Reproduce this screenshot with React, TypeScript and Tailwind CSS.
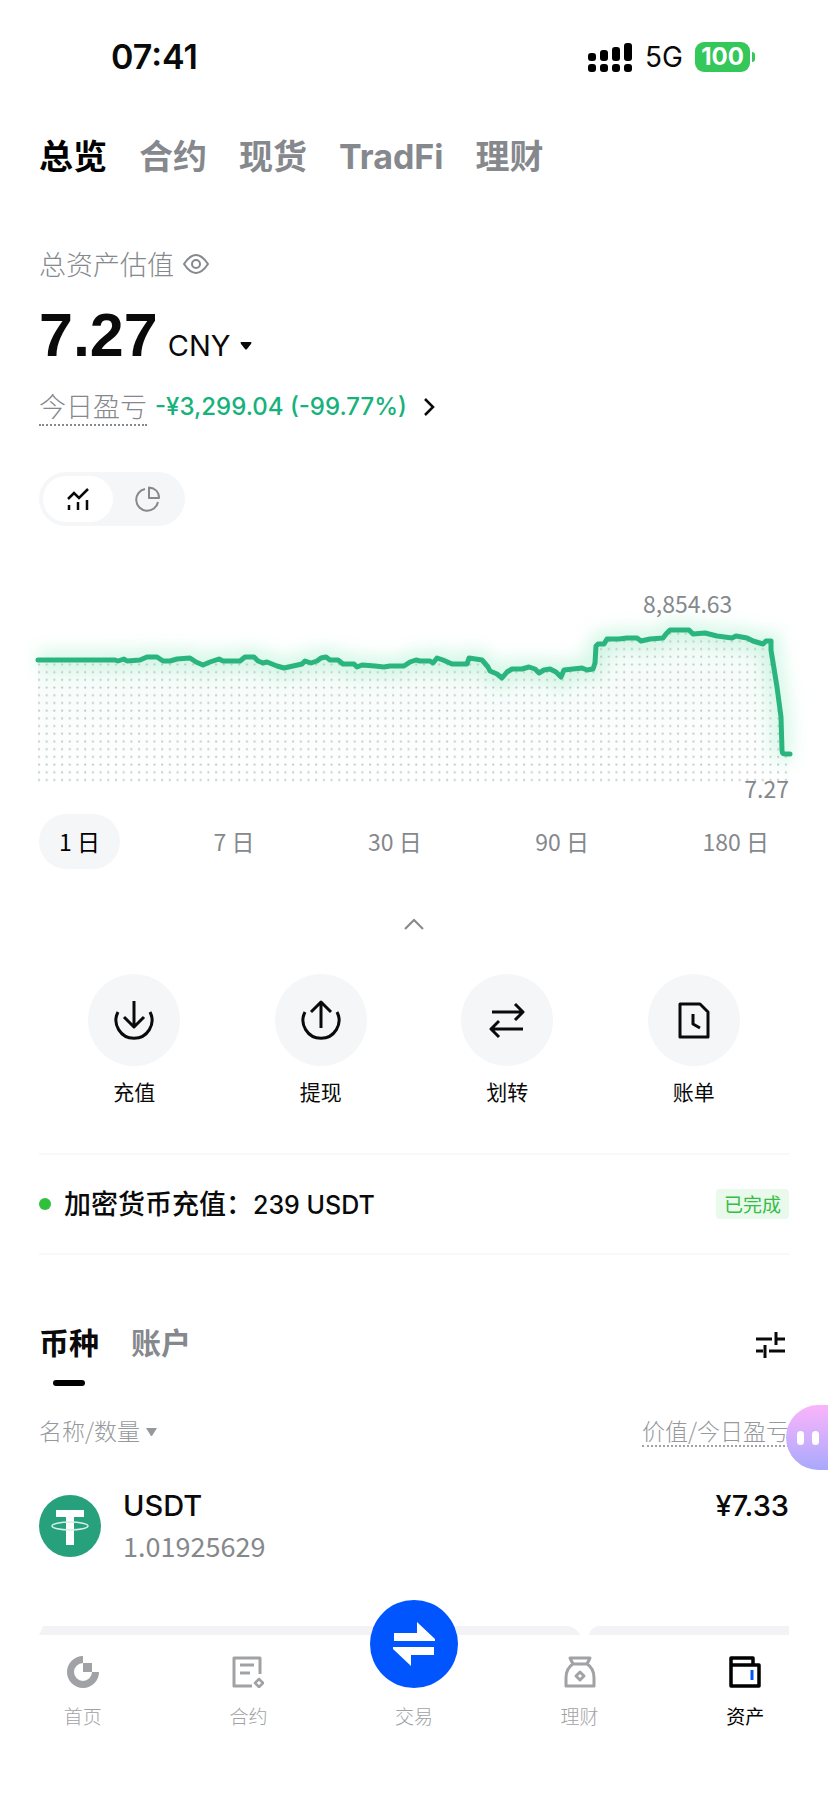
import type { ReactNode } from "react";

const LATIN = "font-['Inter','Noto_Sans_CJK_SC',sans-serif]";

const accountTabs = ["总览", "合约", "现货", "TradFi", "理财"];
const ranges = ["1 日", "7 日", "30 日", "90 日", "180 日"];

const linePath =
  "M38 660H115L118 661 124 659 127 661 140 660 147 657H157L163 661 170 661 177 659 190 658 196 662 203 665 210 662 219 659 223 661H240L245 657H254L258 661 263 663 267 662 277 666 284 668 293 666 302 664 305 661 311 663 317 661 321 658 326 657 330 660 338 660 343 664H354L357 667 362 665 375 666 384 667 390 666 404 666 410 662 416 660 420 661 430 661 433 663 437 658 443 660 452 664H467L469 658 482 660 488 667 490 671 497 674 502 678 507 672 512 669H522L529 667 535 669 539 673 544 670 550 669 556 672 561 677 564 670 573 669 582 668 587 670 593 669 595 663 596 646 598 644H604L607 639 619 639 627 638H637L641 641 650 639 663 638 666 634 670 630H689L693 634 705 633 717 636 732 638 736 636 747 638 753 641 763 644 766 641H771L771 650 777 687 781 717 782 750Q782 754 785 754H790";

function Glyph({ size = 32, children }: { size?: number; children: ReactNode }) {
  return (
    <svg
      width={size}
      height={size}
      viewBox={`0 0 ${size} ${size}`}
      fill="none"
      stroke="currentColor"
      strokeWidth="3"
      strokeLinejoin="round"
      aria-hidden="true"
    >
      {children}
    </svg>
  );
}

function StatusBar() {
  const bars = [8, 11, 14, 18];
  return (
    <div className={`flex h-28 items-center justify-between pt-0.5 pr-[73px] pl-[111px] ${LATIN}`}>
      <span className="text-[34px] leading-10 font-semibold">07:41</span>
      <div className="flex items-center">
        <svg width="44" height="30" viewBox="0 0 44 30" aria-hidden="true">
          {bars.map((h, i) => (
            <g key={h}>
              <rect x={i * 12} y={19 - h} width="8" height={h} rx="3" />
              <rect x={i * 12} y="22" width="8" height="8" rx="3" />
            </g>
          ))}
        </svg>
        <span className="ml-[13px] text-[28px] leading-8">5G</span>
        <span className="ml-3 flex h-[30px] w-[55px] items-center justify-center rounded-[9px] bg-[#34c759] text-2xl font-bold text-white">
          100
        </span>
        <span className="ml-0.5 h-2.5 w-[3px] rounded-r-full bg-[#34c759]" />
      </div>
    </div>
  );
}

function TrendChart() {
  return (
    <svg viewBox="39 590 750 210" className="mt-16 block w-full overflow-visible" role="img" aria-label="资产走势">
      <defs>
        <pattern id="dots" x="35" y="660" width="7.7" height="7.7" patternUnits="userSpaceOnUse">
          <circle cx="4" cy="4.5" r="1.1" fill="#bcc8c4" />
        </pattern>
        <linearGradient id="fade" x1="0" y1="0" x2="0" y2="1">
          <stop offset="0" stopColor="#2bb57e" stopOpacity="0.06" />
          <stop offset="1" stopColor="#2bb57e" stopOpacity="0" />
        </linearGradient>
        <filter id="glow" x="-10%" y="-60%" width="120%" height="220%">
          <feGaussianBlur stdDeviation="9" />
        </filter>
      </defs>
      <path d={`${linePath}V783H38Z`} fill="url(#fade)" />
      <path d={linePath} fill="none" stroke="#6fe6b0" strokeOpacity="0.35" strokeWidth="16" filter="url(#glow)" />
      <path d={`${linePath}V783H38Z`} fill="url(#dots)" />
      <path
        d={linePath}
        fill="none"
        stroke="#2bb57e"
        strokeWidth="5"
        strokeLinecap="round"
        strokeLinejoin="round"
      />
      <g fill="#85888c" fontSize="23" fontFamily="'Noto Sans CJK SC', sans-serif">
        <text x="643" y="613">8,854.63</text>
        <text x="789" y="798" textAnchor="end">7.27</text>
      </g>
    </svg>
  );
}

function Action({ label, children }: { label: string; children: ReactNode }) {
  return (
    <button className="flex flex-col items-center">
      <span className="flex size-[92px] items-center justify-center rounded-full bg-[#f4f6f8]">
        <Glyph size={40}>{children}</Glyph>
      </span>
      <span className="mt-[11px] text-[21px] leading-7">{label}</span>
    </button>
  );
}

function NavItem({ label, active = false, children }: { label: string; active?: boolean; children: ReactNode }) {
  return (
    <a href="#" className={`flex flex-col items-center ${active ? "text-black" : "font-light text-[#a0a2a5]"}`}>
      {children}
      <span className="mt-4 text-[19px] leading-6">{label}</span>
    </a>
  );
}

export default function App() {
  return (
    <div className="min-h-screen bg-white font-['Noto_Sans_CJK_SC',sans-serif] text-[#0a0a0a]">
      <StatusBar />

      <main className="px-[39px]">
        <nav className="flex h-[90px] items-center gap-8">
          {accountTabs.map((tab, i) => (
            <button
              key={tab}
              className={`text-[34px] leading-10 font-bold ${LATIN} ${i === 0 ? "text-black" : "text-[#85888c]"}`}
            >
              {tab}
            </button>
          ))}
        </nav>

        <section>
          <div className="mt-[42px] flex h-10 items-center gap-2 text-[27px] font-light text-[#85888c]">
            <span>总资产估值</span>
            <button aria-label="隐藏资产">
              <svg width="28" height="22" viewBox="0 0 28 22" fill="none" stroke="currentColor" strokeWidth="2">
                <path d="M2 11C6 5 10 2 14 2S22 5 26 11C22 17 18 20 14 20S6 17 2 11Z" strokeLinejoin="round" />
                <circle cx="14" cy="11" r="4" />
              </svg>
            </button>
          </div>

          <div className="mt-[21px] flex h-[60px] items-baseline gap-2.5">
            <span className="font-['Liberation_Sans',sans-serif] text-[61px] leading-[60px] font-bold">7.27</span>
            <button className={`flex items-center gap-2.5 text-[29px] ${LATIN}`}>
              CNY
              <svg width="12" height="8" viewBox="0 0 12 8" aria-hidden="true">
                <path d="M1 0H11Q12 0 11 2L7 7Q6 8 5 7L1 2Q0 0 1 0Z" fill="currentColor" />
              </svg>
            </button>
          </div>

          <div className="mt-[23px] flex h-[38px] items-center gap-2">
            <span className="border-b-2 border-dotted border-[#85888c] text-[27px] leading-9 font-light text-[#85888c]">
              今日盈亏
            </span>
            <button className={`flex items-center gap-4 text-2xl font-medium text-[#16b27b] ${LATIN}`}>
              -¥3,299.04 (-99.77%)
              <svg width="12" height="20" viewBox="0 0 12 20" fill="none" stroke="#0a0a0a" strokeWidth="2.5">
                <path d="M2 2L10 10L2 18" />
              </svg>
            </button>
          </div>

          <div className="mt-[46px] inline-flex h-[54px] rounded-full bg-[#f4f6f8] p-1">
            <button aria-label="走势图" className="flex w-[70px] items-center justify-center rounded-full bg-white">
              <svg width="24" height="24" viewBox="0 0 24 24" fill="none" stroke="currentColor" strokeWidth="2.5">
                <path d="M2 12L8 6L13 11L22 2" />
                <path d="M3 23V18M12 23V15M21 23V13" />
              </svg>
            </button>
            <button aria-label="资产分布" className="flex w-[68px] items-center justify-center text-[#85888c]">
              <svg width="26" height="26" viewBox="0 0 26 26" fill="none" stroke="currentColor" strokeWidth="2">
                <path d="M11 3A11 11 0 1 0 24 16" />
                <path d="M15 1.5V12H25C25 6 21 2 15 1.5Z" strokeLinejoin="round" />
              </svg>
            </button>
          </div>

          <TrendChart />

          <div className="mt-3.5 flex justify-between">
            {ranges.map((range, i) => (
              <button
                key={range}
                className={`h-[55px] rounded-full px-5 text-[23px] ${
                  i === 0 ? "bg-[#f4f6f8] text-black" : "text-[#85888c]"
                }`}
              >
                {range}
              </button>
            ))}
          </div>
        </section>

        <button aria-label="收起" className="mx-auto mt-[43px] flex h-6 w-10 items-center justify-center">
          <svg width="22" height="12" viewBox="0 0 22 12" fill="none" stroke="#85888c" strokeWidth="2">
            <path d="M2 11L11 2L20 11" />
          </svg>
        </button>

        <div className="mt-[38px] grid grid-cols-4 px-0.5">
          <Action label="充值">
            <path d="M20 1V27M10 17L20 27L30 17M4 12A18 18 0 1 0 36 12" />
          </Action>
          <Action label="提现">
            <path d="M20 2V28M10 12L20 2L30 12M4 12A18 18 0 1 0 36 12" />
          </Action>
          <Action label="划转">
            <path d="M5 12H36M28 4L36 12L28 20M36 29H4M12 21L4 29L12 37" />
          </Action>
          <Action label="账单">
            <path d="M6 4H26L34 12V37H6ZM19 14V24L26 28" />
          </Action>
        </div>

        <div className="mt-12 flex h-[102px] items-center border-y-2 border-[#f7f8f9]">
          <span className="size-3 rounded-full bg-[#2fc03c]" />
          <p className="ml-[13px] text-[27px] font-medium">
            加密货币充值：
            <span className={`text-[25px] ${LATIN}`}>239 USDT</span>
          </p>
          <span className="ml-auto rounded-sm bg-[#e9f9eb] px-2 text-[19px] leading-[30px] text-[#35bd45]">已完成</span>
        </div>

        <section>
          <div className="mt-[66px] flex items-start gap-8 text-3xl leading-10 font-bold">
            <button className="flex flex-col items-center">
              币种
              <span className="mt-[19px] h-1.5 w-8 rounded-full bg-black" />
            </button>
            <button className="text-[#85888c]">账户</button>
            <button aria-label="筛选" className="mt-2.5 ml-auto">
              <svg width="34" height="28" viewBox="0 0 34 28" fill="none" stroke="#0a0a0a" strokeWidth="3">
                <path d="M1 8H17M21 1V14M21 8H30M1 20H8M10 14V27M14 20H30" />
              </svg>
            </button>
          </div>

          <div className="relative mt-[29px] flex h-8 items-start justify-between text-[23px] leading-[30px] font-light text-[#96999c]">
            <button className="flex items-center gap-1.5">
              名称/数量
              <svg width="11" height="8" viewBox="0 0 11 8" className="mt-1" aria-hidden="true">
                <path d="M0 0H11L6 8H5Z" fill="currentColor" />
              </svg>
            </button>
            <button className="border-b-2 border-dotted border-[#a0a2a5]">价值/今日盈亏</button>
            <button
              aria-label="助手"
              className="absolute -top-2.5 -right-[39px] flex h-[65px] w-[42px] items-center gap-2 rounded-l-full bg-gradient-to-b from-[#fab4fb] to-[#a8a8fc] pl-[11px]"
            >
              <span className="h-3.5 w-[7px] rounded-full bg-white" />
              <span className="h-3.5 w-[7px] rounded-full bg-white" />
            </button>
          </div>

          <div className="mt-[41px] flex items-center">
            <svg width="62" height="62" viewBox="0 0 62 62" aria-hidden="true">
              <circle cx="31" cy="31" r="31" fill="#26a17b" />
              <path d="M17 15H45V22H35V50H27V22H17Z" fill="#fff" />
              <ellipse cx="31" cy="31" rx="18" ry="4" fill="none" stroke="#d6efe6" strokeWidth="1.5" />
            </svg>
            <div className="ml-[22px] flex-1">
              <div className={`flex justify-between text-[29px] leading-9 font-medium ${LATIN}`}>
                <span>USDT</span>
                <span>¥7.33</span>
              </div>
              <p className="mt-1 text-[27px] leading-9 text-[#85888c]">1.01925629</p>
            </div>
          </div>

          <svg
            viewBox="0 0 752 9"
            preserveAspectRatio="none"
            className="mt-[62px] block h-[9px] w-full"
            fill="#f3f3f5"
            aria-hidden="true"
          >
            <path d="M4 0H530Q538 1 543 9H0ZM560 0H752V9H551Q554 1 560 0Z" />
          </svg>
        </section>
      </main>

      <nav className="grid grid-cols-5 bg-white pt-[21px] pb-[66px]">
        <NavItem label="首页">
          <svg width="32" height="32" viewBox="0 0 32 32" fill="currentColor" aria-hidden="true">
            <path d="M16 0A16 16 0 1 0 32 16H25A9 9 0 1 1 16 7Z" />
            <path d="M16 7H25V16H16Z" />
          </svg>
        </NavItem>
        <NavItem label="合约">
          <Glyph>
            <path d="M20 30H2V2H28V18M8 9H22M8 17H18" />
            <path d="M27 23L31 27L27 31L23 27Z" strokeWidth="2.5" />
          </Glyph>
        </NavItem>
        <NavItem label="交易">
          <span className="-mt-14 flex size-[88px] items-center justify-center rounded-full bg-[#0055ff]">
            <svg width="44" height="44" viewBox="0 0 44 44" fill="#fff" aria-hidden="true">
              <path d="M2 11H25V0L43 17V19H2Z" />
              <path d="M42 33H19V44L1 27V25H42Z" />
            </svg>
          </span>
        </NavItem>
        <NavItem label="理财">
          <Glyph>
            <path d="M6 2H26L23 8H9ZM9 8C4 11 2 16 2 22V30H30V22C30 16 28 11 23 8" />
            <path d="M16 16L20 20L16 24L12 20Z" />
          </Glyph>
        </NavItem>
        <NavItem label="资产" active>
          <Glyph>
            <path d="M2 9V2H24V9M2 9H30V30H2Z" strokeWidth="3.5" />
            <path d="M23 14V24" stroke="#0055ff" />
          </Glyph>
        </NavItem>
      </nav>
    </div>
  );
}
